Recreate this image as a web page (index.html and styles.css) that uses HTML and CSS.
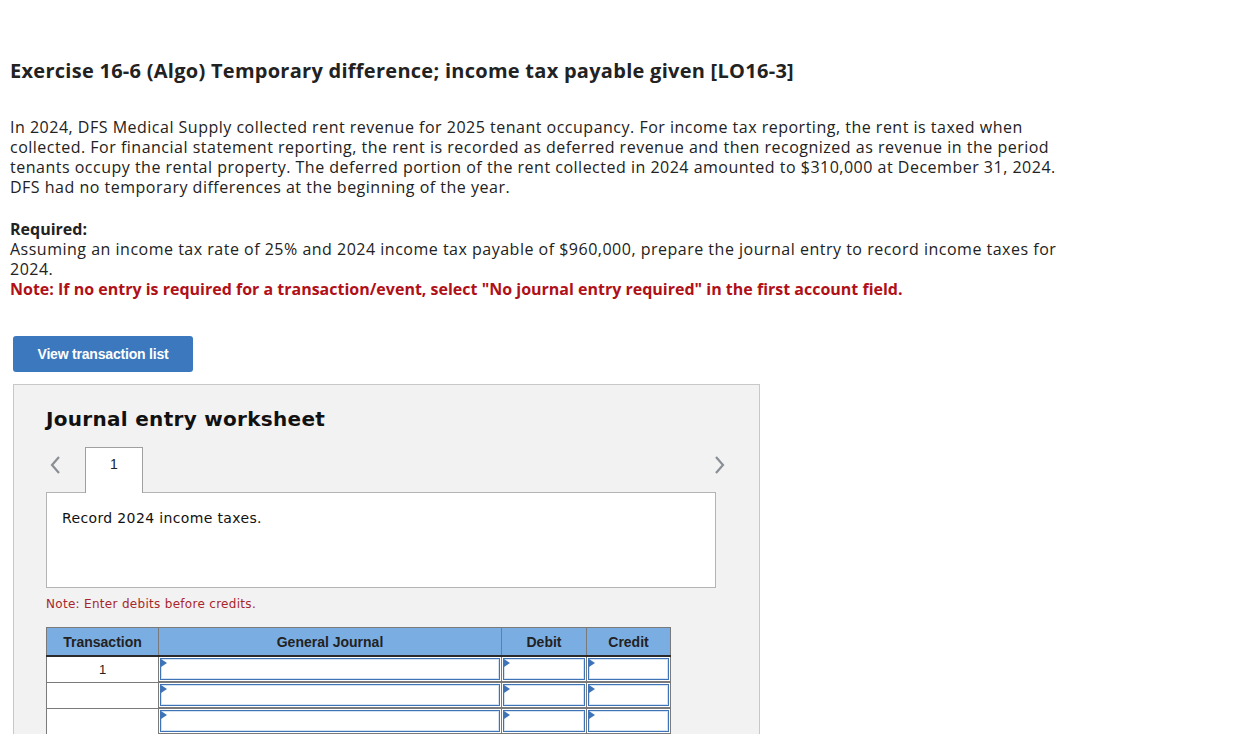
FILE: index.html
```html
<!DOCTYPE html>
<html lang="en">
<head>
<meta charset="utf-8">
<title>Exercise 16-6</title>
<link rel="stylesheet" href="styles.css">
</head>
<body>
<div class="page">
  <h1 class="title">Exercise 16-6 (Algo) Temporary difference; income tax payable given [LO16-3]</h1>
  <p class="intro">In 2024, DFS Medical Supply collected rent revenue for 2025 tenant occupancy. For income tax reporting, the rent is taxed when collected. For financial statement reporting, the rent is recorded as deferred revenue and then recognized as revenue in the period tenants occupy the rental property. The deferred portion of the rent collected in 2024 amounted to $310,000 at December 31, 2024. DFS had no temporary differences at the beginning of the year.</p>
  <div class="required">
    <div class="req-label">Required:</div>
    <div class="req-text">Assuming an income tax rate of 25% and 2024 income tax payable of $960,000, prepare the journal entry to record income taxes for 2024.</div>
    <div class="req-note">Note: If no entry is required for a transaction/event, select "No journal entry required" in the first account field.</div>
  </div>
  <button class="btn">View transaction list</button>
  <div class="worksheet">
    <h2 class="ws-title">Journal entry worksheet</h2>
    <div class="tabs">
      <span class="arrow">
        <svg width="12" height="18" viewBox="0 0 12 18"><path d="M10 1 L3 9 L10 17" fill="none" stroke="#8a8f96" stroke-width="2.2"/></svg>
      </span>
      <div class="tab">1</div>
      <span class="arrow arrow-right">
        <svg width="12" height="18" viewBox="0 0 12 18"><path d="M2 1 L9 9 L2 17" fill="none" stroke="#8a8f96" stroke-width="2.2"/></svg>
      </span>
    </div>
    <div class="desc">Record 2024 income taxes.</div>
    <div class="ws-note">Note: Enter debits before credits.</div>
    <table class="journal">
      <colgroup>
        <col class="c-tr">
        <col class="c-gj">
        <col class="c-db">
        <col class="c-cr">
      </colgroup>
      <thead>
        <tr>
          <th class="h-first">Transaction</th>
          <th>General Journal</th>
          <th>Debit</th>
          <th>Credit</th>
        </tr>
      </thead>
      <tbody>
        <tr>
          <td class="tr-cell">1</td>
          <td class="in-cell"><div class="inp"></div></td>
          <td class="in-cell"><div class="inp"></div></td>
          <td class="in-cell"><div class="inp"></div></td>
        </tr>
        <tr>
          <td class="tr-cell"></td>
          <td class="in-cell"><div class="inp"></div></td>
          <td class="in-cell"><div class="inp"></div></td>
          <td class="in-cell"><div class="inp"></div></td>
        </tr>
        <tr>
          <td class="tr-cell"></td>
          <td class="in-cell"><div class="inp"></div></td>
          <td class="in-cell"><div class="inp"></div></td>
          <td class="in-cell"><div class="inp"></div></td>
        </tr>
      </tbody>
    </table>
  </div>
</div>
</body>
</html>
```

FILE: styles.css
```css
html, body {
  margin: 0;
  padding: 0;
  background: #fff;
}
body {
  font-family: "Open Sans", "Liberation Sans", sans-serif;
  color: #222;
}
.page {
  padding: 58px 0 0 10px;
  width: 1066px;
}
.title {
  font-size: 20px;
  font-weight: 700;
  line-height: 26px;
  margin: 0 0 33px 0;
  color: #222;
  letter-spacing: 0.27px;
}
.intro {
  font-size: 16px;
  line-height: 20px;
  margin: 0 0 22px 0;
  color: #222;
  letter-spacing: 0.5px;
}
.required {
  font-size: 16px;
  line-height: 20px;
}
.req-label {
  font-weight: 700;
}
.req-text {
  letter-spacing: 0.5px;
}
.req-note {
  font-weight: 700;
  color: #b01017;
}
.btn {
  display: block;
  margin: 37px 0 0 3px;
  width: 180px;
  height: 36px;
  border: none;
  border-radius: 3px;
  background: #3b78bd;
  color: #fff;
  font-family: "Liberation Sans", Arial, sans-serif;
  font-weight: 700;
  font-size: 14px;
  letter-spacing: -0.2px;
  padding: 0;
}
.worksheet {
  margin: 12px 0 0 3px;
  width: 713px;
  background: #f2f2f2;
  border: 1px solid #c8c8c8;
  border-bottom: none;
  padding: 20px 0 0 32px;
  height: 330px;
  box-sizing: content-box;
}
.ws-title {
  font-family: "DejaVu Sans", Verdana, sans-serif;
  font-size: 20px;
  font-weight: 700;
  margin: 0;
  line-height: 28px;
  color: #111;
  letter-spacing: 0.3px;
}
.tabs {
  margin-top: 14px;
  display: flex;
  align-items: flex-start;
  width: 680px;
}
.arrow {
  display: flex;
  width: 39px;
  padding: 9px 0 0 3px;
  box-sizing: border-box;
}
.arrow-right {
  margin-left: auto;
  width: 12px;
  padding: 9px 0 0 0;
}
.tab {
  width: 56px;
  height: 45px;
  background: #fff;
  border: 1px solid #a0a0a0;
  border-bottom: none;
  text-align: center;
  font-family: "Liberation Sans", Arial, sans-serif;
  font-size: 14px;
  line-height: 32px;
  color: #222;
  position: relative;
  z-index: 1;
}
.desc {
  background: #fff;
  border: 1px solid #b4b4b4;
  box-sizing: content-box;
  font-family: "DejaVu Sans", Verdana, sans-serif;
  font-size: 14px;
  color: #111;
  padding: 16px 0 0 15px;
  width: 653px;
  line-height: 18px;
  height: 78px;
  margin-top: -1px;
  letter-spacing: 0.36px;
}
.ws-note {
  font-family: "DejaVu Sans", Verdana, sans-serif;
  font-size: 12px;
  color: #a8262b;
  margin-top: 9px;
  line-height: 14px;
  letter-spacing: 0.3px;
}
.journal {
  margin-top: 16px;
  border-collapse: collapse;
  table-layout: fixed;
  width: 624px;
}
.c-tr { width: 112px; }
.c-gj { width: 343px; }
.c-db { width: 85px; }
.c-cr { width: 84px; }
.journal th {
  background: #7aaee3;
  font-family: "Liberation Sans", Arial, sans-serif;
  font-size: 14px;
  font-weight: 700;
  color: #222;
  height: 27px;
  padding: 0;
  border: 1px solid #7a7a7a;
  border-bottom: 2px solid #2b2b2b;
  border-left: 1px solid #2b2b2b;
}
.journal th.h-first { border-left: 1px solid #7a7a7a; }
.journal td {
  height: 24px;
  padding: 0;
  border: 1px solid #7a7a7a;
  background: #fff;
}
.tr-cell {
  text-align: center;
  font-family: "Liberation Sans", Arial, sans-serif;
  font-size: 13px;
  color: #222;
  vertical-align: middle;
}
.journal td.in-cell {
  border-width: 1px 1px 2px 1px;
  border-color: #7a7a7a;
}
.inp {
  position: relative;
  height: 20px;
  margin: 1px;
  border: 1px solid #3e73b8;
  box-shadow: inset 0 0 0 1px #d4e2f2;
  background: #fff;
}
.inp::before {
  content: "";
  position: absolute;
  left: 0;
  top: 0;
  width: 0;
  height: 0;
  border-top: 4px solid transparent;
  border-bottom: 4px solid transparent;
  border-left: 6px solid #3e73b8;
}
```
